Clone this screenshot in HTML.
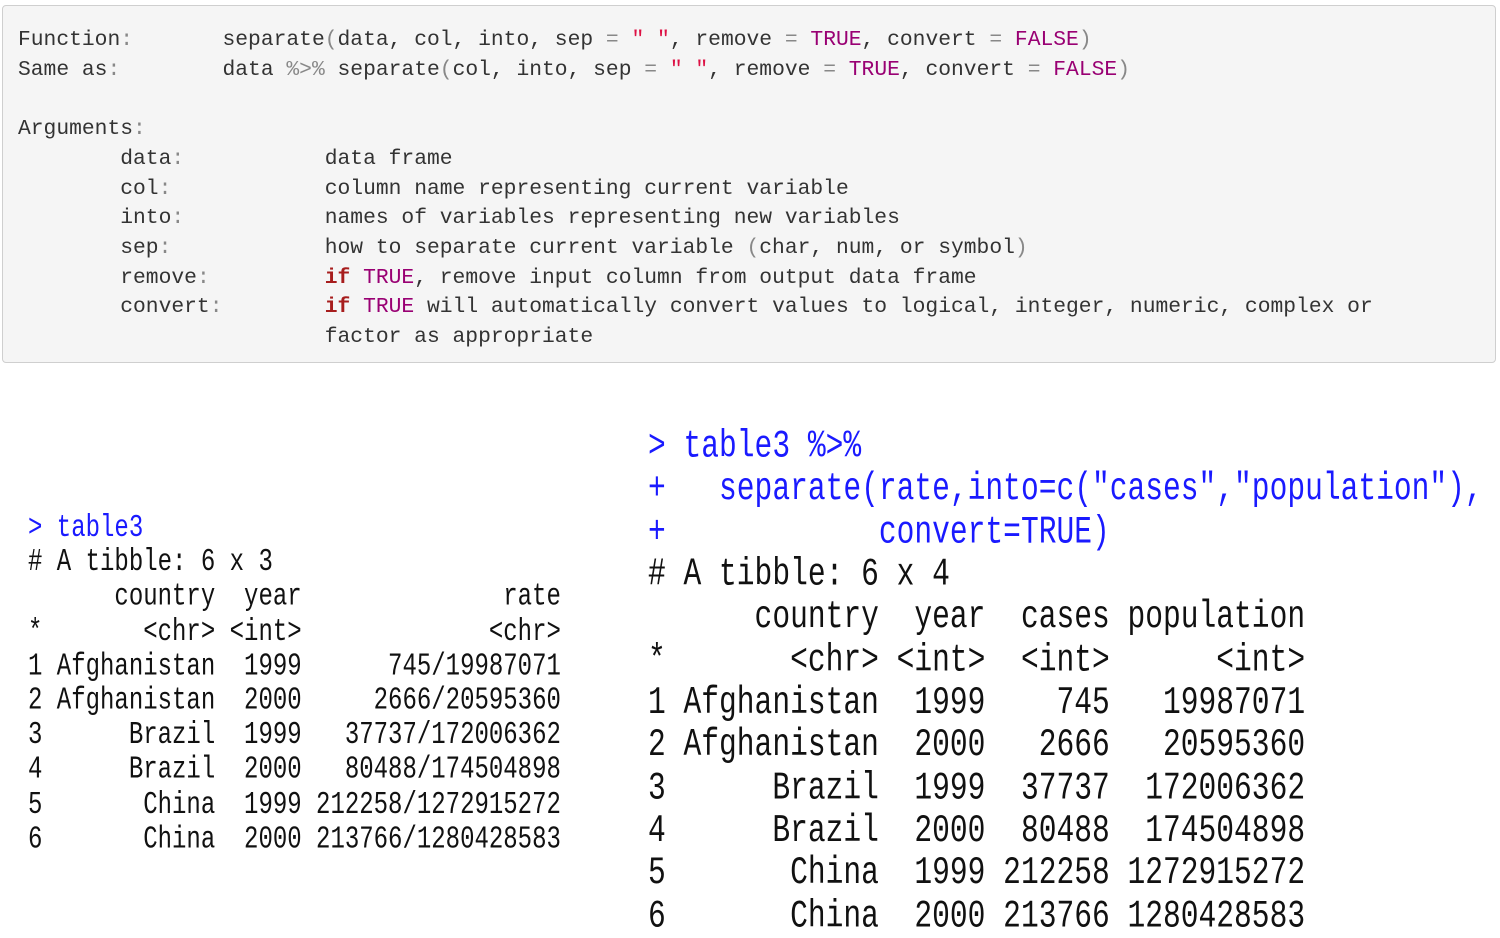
<!DOCTYPE html>
<html><head><meta charset="utf-8"><style>
body{margin:0;width:1500px;height:937px;background:#fff;position:relative;overflow:hidden}
.box{position:absolute;left:2px;top:5px;width:1494px;height:358px;background:#f5f5f5;border:1px solid #cfcfcf;border-radius:4px;box-sizing:border-box}
pre{margin:0;position:absolute;white-space:pre}
.top{left:18px;top:26px;font:21.3px/29.7px "Liberation Mono",monospace;color:#333}
.p{color:#888}.s{color:#dd1144}.k{color:#990073}.b{color:#a71d1d;font-weight:bold}
.r{font-family:"Liberation Mono",monospace;color:#111;transform-origin:0 0;transform:scaleY(1.32)}
.l{left:28px;top:512px;font-size:24px;line-height:26.21px}
.rt{left:648px;top:424.5px;font-size:29.6px;line-height:32.35px}
.bl{color:#1a1aff}
</style></head><body>
<div class="box"></div>
<pre class="top">Function<span class="p">:</span>       separate<span class="p">(</span>data, col, into, sep <span class="p">=</span> <span class="s">" "</span>, remove <span class="p">=</span> <span class="k">TRUE</span>, convert <span class="p">=</span> <span class="k">FALSE</span><span class="p">)</span>
Same as<span class="p">:</span>        data <span class="p">%&gt;%</span> separate<span class="p">(</span>col, into, sep <span class="p">=</span> <span class="s">" "</span>, remove <span class="p">=</span> <span class="k">TRUE</span>, convert <span class="p">=</span> <span class="k">FALSE</span><span class="p">)</span>

Arguments<span class="p">:</span>
        data<span class="p">:</span>           data frame
        col<span class="p">:</span>            column name representing current variable
        into<span class="p">:</span>           names of variables representing new variables
        sep<span class="p">:</span>            how to separate current variable <span class="p">(</span>char, num, or symbol<span class="p">)</span>
        remove<span class="p">:</span>         <span class="b">if</span> <span class="k">TRUE</span>, remove input column from output data frame
        convert<span class="p">:</span>        <span class="b">if</span> <span class="k">TRUE</span> will automatically convert values to logical, integer, numeric, complex or
                        factor as appropriate</pre>
<pre class="r l"><span class="bl">&gt; table3</span>
# A tibble: 6 x 3
      country  year              rate
*       &lt;chr&gt; &lt;int&gt;             &lt;chr&gt;
1 Afghanistan  1999      745/19987071
2 Afghanistan  2000     2666/20595360
3      Brazil  1999   37737/172006362
4      Brazil  2000   80488/174504898
5       China  1999 212258/1272915272
6       China  2000 213766/1280428583</pre>
<pre class="r rt"><span class="bl">&gt; table3 %&gt;%
+   separate(rate,into=c("cases","population"),
+            convert=TRUE)</span>
# A tibble: 6 x 4
      country  year  cases population
*       &lt;chr&gt; &lt;int&gt;  &lt;int&gt;      &lt;int&gt;
1 Afghanistan  1999    745   19987071
2 Afghanistan  2000   2666   20595360
3      Brazil  1999  37737  172006362
4      Brazil  2000  80488  174504898
5       China  1999 212258 1272915272
6       China  2000 213766 1280428583</pre>
</body></html>
